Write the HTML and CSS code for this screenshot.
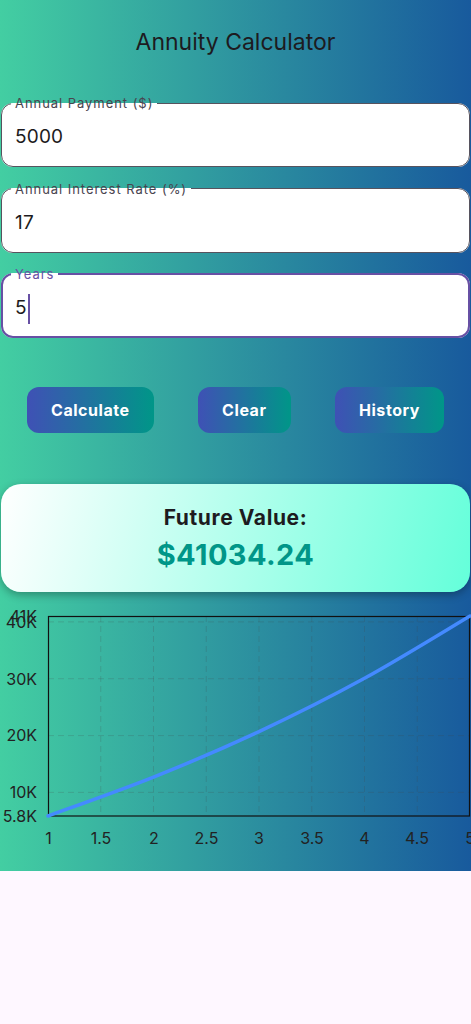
FILE: index.html
```html
<!DOCTYPE html>
<html lang="en">
<head>
<meta charset="utf-8">
<title>Annuity Calculator</title>
<link rel="stylesheet" href="styles.css">
</head>
<body>
<div class="app">
  <header class="appbar"><h1 class="title">Annuity Calculator</h1></header>
  <main class="content">
    <form class="form">
      <fieldset class="field"><legend>Annual Payment ($)</legend><div class="value">5000</div></fieldset>
      <fieldset class="field"><legend>Annual Interest Rate (%)</legend><div class="value">17</div></fieldset>
      <fieldset class="field focused"><legend>Years</legend><div class="value">5<span class="caret"></span></div></fieldset>
    </form>
    <div class="actions">
      <button class="btn" type="button">Calculate</button>
      <button class="btn" type="button">Clear</button>
      <button class="btn" type="button">History</button>
    </div>
    <section class="result">
      <div class="result-label">Future Value:</div>
      <div class="result-value">$41034.24</div>
    </section>
    <svg class="chart" width="471" height="260" viewBox="0 0 471 260">
      <g class="grid">
        <line x1="48" y1="192.4" x2="470" y2="192.4"/>
        <line x1="48" y1="135.6" x2="470" y2="135.6"/>
        <line x1="48" y1="78.7" x2="470" y2="78.7"/>
        <line x1="48" y1="21.9" x2="470" y2="21.9"/>
        <line x1="100.75" y1="16" x2="100.75" y2="216"/>
        <line x1="153.5" y1="16" x2="153.5" y2="216"/>
        <line x1="206.25" y1="16" x2="206.25" y2="216"/>
        <line x1="259" y1="16" x2="259" y2="216"/>
        <line x1="311.75" y1="16" x2="311.75" y2="216"/>
        <line x1="364.5" y1="16" x2="364.5" y2="216"/>
        <line x1="417.25" y1="16" x2="417.25" y2="216"/>
      </g>
      <rect class="frame" x="48.5" y="16.5" width="421" height="199.5"/>
      <path class="series" d="M48,216 C65.58,209.52 118.33,191.17 153.5,177.1 C188.67,163.03 223.83,148.07 259,131.6 C294.17,115.13 329.33,97.57 364.5,78.3 C399.67,59.03 452.42,26.38 470,16"/>
      <g class="ylabels">
        <text x="37" y="21.8">41K</text>
        <text x="37" y="27.8">40K</text>
        <text x="37" y="84.5">30K</text>
        <text x="37" y="141.4">20K</text>
        <text x="37" y="198.2">10K</text>
        <text x="37" y="221.8">5.8K</text>
      </g>
      <g class="xlabels">
        <text x="48.5" y="244">1</text>
        <text x="101" y="244">1.5</text>
        <text x="154" y="244">2</text>
        <text x="206.5" y="244">2.5</text>
        <text x="259" y="244">3</text>
        <text x="312" y="244">3.5</text>
        <text x="364.5" y="244">4</text>
        <text x="417" y="244">4.5</text>
        <text x="470" y="244">5</text>
      </g>
    </svg>
  </main>
</div>
</body>
</html>
```

FILE: styles.css
```css
* { box-sizing: border-box; }

body {
  margin: 0;
  background: #fef7ff;
  font-family: Inter, "Noto Sans", sans-serif;
}

.app {
  height: 871px;
  background: linear-gradient(to right, #43cea2, #185a9d);
  display: flex;
  flex-direction: column;
  overflow: hidden;
}

.appbar {
  height: 84px;
  display: flex;
  align-items: center;
  justify-content: center;
}

.title {
  margin: 0;
  font-size: 23px;
  font-weight: 400;
  color: #1d1b20;
}

.form {
  display: flex;
  flex-direction: column;
  gap: 14.5px;
  padding: 0 1px;
  margin: 12px 0 0;
}

.field {
  margin: 0;
  padding: 0;
  min-width: 0;
  border: 1px solid #57535e;
  border-radius: 12px;
  background: #fff;
}

.field legend {
  margin-left: 9px;
  padding: 0 4px;
  font-size: 13px;
  line-height: 14px;
  letter-spacing: 0.95px;
  color: #49454f;
}

.value {
  height: 56px;
  padding: 15px 0 0 13px;
  font-size: 19px;
  line-height: 24px;
  letter-spacing: 0.2px;
  color: #1d1b20;
}

.field.focused {
  border: 2px solid #6750a4;
}

.field.focused legend {
  margin-left: 8px;
  color: #6750a4;
}

.field.focused .value {
  height: 55px;
  padding-top: 13px;
  padding-left: 12px;
}

.caret {
  display: inline-block;
  width: 2px;
  height: 30px;
  margin-left: 1px;
  vertical-align: middle;
  background: #6750a4;
}

.actions {
  display: flex;
  justify-content: space-between;
  padding: 0 27px;
  margin-top: 48.5px;
}

.btn {
  height: 46px;
  padding: 0 24px;
  border: 0;
  border-radius: 12px;
  background: linear-gradient(to right, #3f51b5, #009688);
  color: #fff;
  font-family: Inter, "Noto Sans", sans-serif;
  font-size: 16px;
  font-weight: 700;
  letter-spacing: 0.55px;
}

.result {
  margin: 51px 1px 0;
  height: 108px;
  border-radius: 20px;
  background: linear-gradient(103deg, #ffffff, #64ffda);
  box-shadow: 0 3px 8px rgba(0, 0, 0, 0.3);
  display: flex;
  flex-direction: column;
  align-items: center;
  justify-content: center;
  gap: 6px;
  padding-top: 2px;
}

.result-label {
  font-size: 21px;
  line-height: 26px;
  font-weight: 700;
  color: #1d1b20;
  letter-spacing: 0.6px;
}

.result-value {
  font-size: 29px;
  line-height: 36px;
  font-weight: 700;
  color: #009688;
  letter-spacing: 0.4px;
}

.chart {
  display: block;
  margin-top: 8px;
  overflow: hidden;
}

.grid line {
  stroke: rgba(70, 70, 70, 0.2);
  stroke-width: 1;
  stroke-dasharray: 6 4;
}

.frame {
  fill: none;
  stroke: #111;
  stroke-width: 1.2;
}

.series {
  fill: none;
  stroke: #448aff;
  stroke-width: 3.5;
  stroke-linecap: round;
}

.ylabels text,
.xlabels text {
  font-family: Inter, "Noto Sans", sans-serif;
  font-size: 16px;
  fill: #222;
}

.ylabels text { text-anchor: end; }
.xlabels text { text-anchor: middle; }
```
